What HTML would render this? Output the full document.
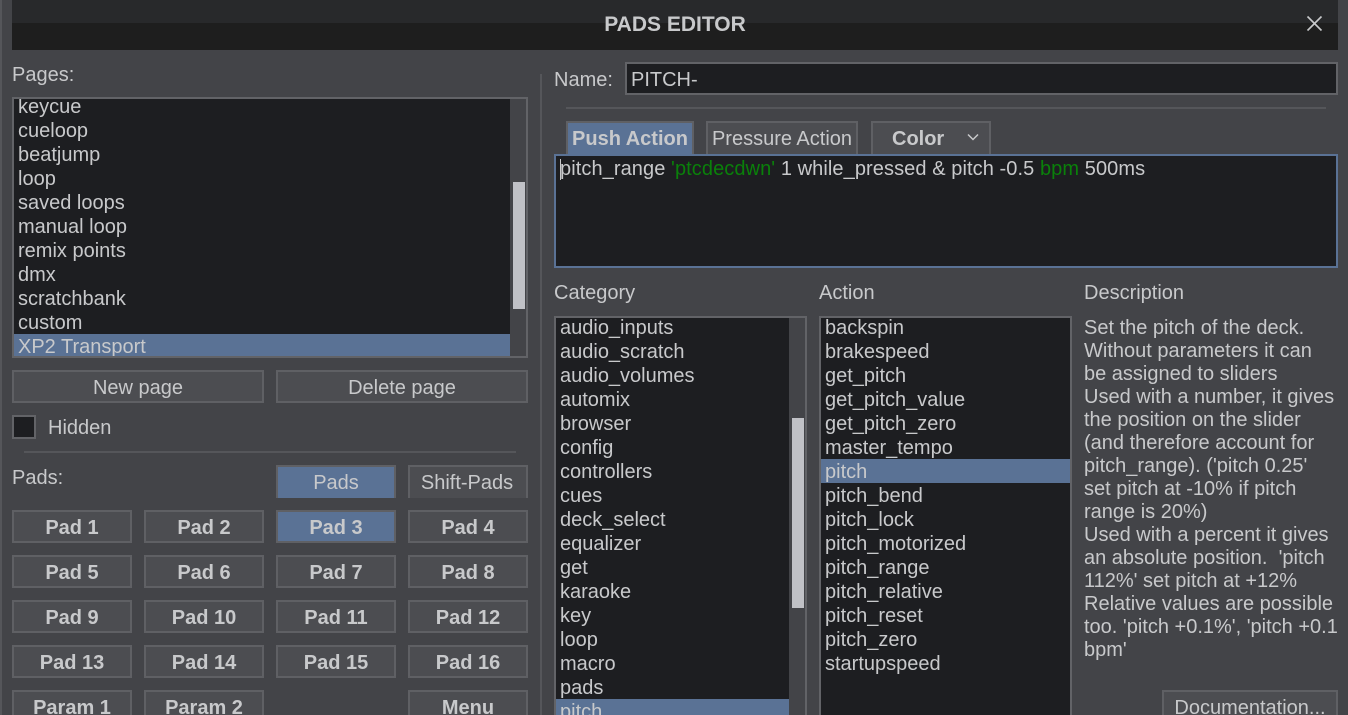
<!DOCTYPE html>
<html style="overflow:hidden;height:715px"><head><meta charset="utf-8">
<style>
html,body{margin:0;padding:0}
body{width:1348px;height:715px;overflow:hidden;position:relative;background:#434448;font-family:"Liberation Sans",Arial,sans-serif;font-size:20px;color:#c8c9cb}
div{position:absolute;box-sizing:border-box;white-space:nowrap}
.t{line-height:24px;height:24px}
.box{border:2px solid #626367;background:#1d1e21}
.b{border:2px solid #5f6064;background:#4c4d51;text-align:center;line-height:32px;height:33px;width:120px}
.p{font-weight:bold}
.sel{background:#5a7295}
.tab{border-bottom:0}
.g{color:#0a800a}
span{white-space:pre}
</style></head><body>
<div style="left:0;top:0;width:1348px;height:715px;overflow:hidden">
<div style="left:0;top:0;width:2px;height:715px;background:#55565a"></div>
<div style="left:12px;top:0;width:1326px;height:23px;background:#28292b"></div>
<div style="left:12px;top:23px;width:1326px;height:27px;background:#1e1e1e"></div>
<div class="t" style="left:0;width:1350px;top:13px;text-align:center;font-weight:bold;font-size:21px;color:#c8c9cb">PADS EDITOR</div>
<svg style="position:absolute;left:1305.5px;top:14.5px" width="17" height="17"><path d="M1.5 1.5L15.5 15.5M15.5 1.5L1.5 15.5" stroke="#c8c9cb" stroke-width="1.6" fill="none"/></svg>

<div class="t" style="left:12px;top:63px">Pages:</div>
<div class="box" style="left:12px;top:97px;width:516px;height:261px;overflow:hidden;background:#434448">
<div style="left:0;top:0;width:496px;height:257px;background:#1d1e21;overflow:hidden">
<div class="t" style="left:4px;top:-4px">keycue</div>
<div class="t" style="left:4px;top:20px">cueloop</div>
<div class="t" style="left:4px;top:44px">beatjump</div>
<div class="t" style="left:4px;top:68px">loop</div>
<div class="t" style="left:4px;top:92px">saved loops</div>
<div class="t" style="left:4px;top:116px">manual loop</div>
<div class="t" style="left:4px;top:140px">remix points</div>
<div class="t" style="left:4px;top:164px">dmx</div>
<div class="t" style="left:4px;top:188px">scratchbank</div>
<div class="t" style="left:4px;top:212px">custom</div>
<div class="sel" style="left:0;top:235px;width:496px;height:24px"></div>
<div class="t" style="left:4px;top:236px">XP2 Transport</div>
</div>
<div style="left:499px;top:83px;width:12px;height:127px;background:#c0c1c6"></div>
</div>

<div class="b" style="left:12px;top:370px;width:252px">New page</div>
<div class="b" style="left:276px;top:370px;width:252px">Delete page</div>
<div class="box" style="left:12px;top:415px;width:24px;height:24px"></div>
<div class="t" style="left:48px;top:416px">Hidden</div>
<div style="left:24px;top:451px;width:492px;height:2px;background:#55565a"></div>
<div class="t" style="left:12px;top:466px">Pads:</div>
<div class="b tab sel" style="left:276px;top:465px">Pads</div>
<div class="b tab" style="left:408px;top:465px;padding-right:2px">Shift-Pads</div>

<div class="b p" style="left:12px;top:510px">Pad 1</div>
<div class="b p" style="left:144px;top:510px">Pad 2</div>
<div class="b p sel" style="left:276px;top:510px">Pad 3</div>
<div class="b p" style="left:408px;top:510px">Pad 4</div>
<div class="b p" style="left:12px;top:555px">Pad 5</div>
<div class="b p" style="left:144px;top:555px">Pad 6</div>
<div class="b p" style="left:276px;top:555px">Pad 7</div>
<div class="b p" style="left:408px;top:555px">Pad 8</div>
<div class="b p" style="left:12px;top:600px">Pad 9</div>
<div class="b p" style="left:144px;top:600px">Pad 10</div>
<div class="b p" style="left:276px;top:600px">Pad 11</div>
<div class="b p" style="left:408px;top:600px">Pad 12</div>
<div class="b p" style="left:12px;top:645px">Pad 13</div>
<div class="b p" style="left:144px;top:645px">Pad 14</div>
<div class="b p" style="left:276px;top:645px">Pad 15</div>
<div class="b p" style="left:408px;top:645px">Pad 16</div>
<div class="b p" style="left:12px;top:690px">Param 1</div>
<div class="b p" style="left:144px;top:690px">Param 2</div>
<div class="b p" style="left:408px;top:690px">Menu</div>

<div style="left:540px;top:74px;width:2px;height:641px;background:#55565a"></div>

<div class="t" style="left:554px;top:68px">Name:</div>
<div class="box" style="left:625px;top:62px;width:713px;height:33px;padding-left:4px;line-height:33px">PITCH-</div>
<div style="left:566px;top:107px;width:760px;height:2px;background:#55565a"></div>

<div class="b tab sel p" style="left:566px;top:121px;width:128px;height:33px;line-height:32px">Push Action</div>
<div class="b tab" style="left:706px;top:121px;width:152px;height:33px;line-height:32px">Pressure Action</div>
<div class="b tab p" style="left:871px;top:121px;width:120px;height:33px;line-height:32px;text-align:left;padding-left:19px">Color
<svg style="position:absolute;left:94px;top:10px" width="12" height="9"><path d="M1 1.5L6 6.5L11 1.5" stroke="#c8c9cb" stroke-width="1.5" fill="none"/></svg></div>

<div style="left:554px;top:154px;width:784px;height:114px;border:2px solid #5a7295;background:#1d1e21">
<div style="left:4px;top:3px;width:1px;height:21px;background:#c8c9cb"></div>
<div class="t" style="left:4px;top:1px;letter-spacing:.08px">pitch_range <span class="g">'ptcdecdwn'</span> 1 while_pressed &amp; pitch -0.5 <span class="g">bpm</span> 500ms</div>
</div>

<div class="t" style="left:554px;top:281px">Category</div>
<div class="t" style="left:819px;top:281px">Action</div>
<div class="t" style="left:1084px;top:281px">Description</div>

<div class="box" style="left:554px;top:316px;width:253px;height:410px;background:#434448">
<div style="left:0;top:0;width:233px;height:410px;background:#1d1e21"></div>
<div class="sel" style="left:0;top:381px;width:233px;height:24px"></div>
<div class="t" style="left:4px;top:-2px">audio_inputs</div>
<div class="t" style="left:4px;top:22px">audio_scratch</div>
<div class="t" style="left:4px;top:46px">audio_volumes</div>
<div class="t" style="left:4px;top:70px">automix</div>
<div class="t" style="left:4px;top:94px">browser</div>
<div class="t" style="left:4px;top:118px">config</div>
<div class="t" style="left:4px;top:142px">controllers</div>
<div class="t" style="left:4px;top:166px">cues</div>
<div class="t" style="left:4px;top:190px">deck_select</div>
<div class="t" style="left:4px;top:214px">equalizer</div>
<div class="t" style="left:4px;top:238px">get</div>
<div class="t" style="left:4px;top:262px">karaoke</div>
<div class="t" style="left:4px;top:286px">key</div>
<div class="t" style="left:4px;top:310px">loop</div>
<div class="t" style="left:4px;top:334px">macro</div>
<div class="t" style="left:4px;top:358px">pads</div>
<div class="t" style="left:4px;top:382px">pitch</div>
<div style="left:236px;top:100px;width:12px;height:190px;background:#c0c1c6"></div>
</div>

<div class="box" style="left:819px;top:316px;width:253px;height:410px">
<div class="sel" style="left:0;top:141px;width:249px;height:24px"></div>
<div class="t" style="left:4px;top:-2px">backspin</div>
<div class="t" style="left:4px;top:22px">brakespeed</div>
<div class="t" style="left:4px;top:46px">get_pitch</div>
<div class="t" style="left:4px;top:70px">get_pitch_value</div>
<div class="t" style="left:4px;top:94px">get_pitch_zero</div>
<div class="t" style="left:4px;top:118px">master_tempo</div>
<div class="t" style="left:4px;top:142px">pitch</div>
<div class="t" style="left:4px;top:166px">pitch_bend</div>
<div class="t" style="left:4px;top:190px">pitch_lock</div>
<div class="t" style="left:4px;top:214px">pitch_motorized</div>
<div class="t" style="left:4px;top:238px">pitch_range</div>
<div class="t" style="left:4px;top:262px">pitch_relative</div>
<div class="t" style="left:4px;top:286px">pitch_reset</div>
<div class="t" style="left:4px;top:310px">pitch_zero</div>
<div class="t" style="left:4px;top:334px">startupspeed</div>
</div>

<div class="t" style="left:1084px;top:316px">Set the pitch of the deck.</div>
<div class="t" style="left:1084px;top:339px">Without parameters it can</div>
<div class="t" style="left:1084px;top:362px">be assigned to sliders</div>
<div class="t" style="left:1084px;top:385px">Used with a number, it gives</div>
<div class="t" style="left:1084px;top:408px">the position on the slider</div>
<div class="t" style="left:1084px;top:431px">(and therefore account for</div>
<div class="t" style="left:1084px;top:454px">pitch_range). ('pitch 0.25'</div>
<div class="t" style="left:1084px;top:477px">set pitch at -10% if pitch</div>
<div class="t" style="left:1084px;top:500px">range is 20%)</div>
<div class="t" style="left:1084px;top:523px">Used with a percent it gives</div>
<div class="t" style="left:1084px;top:546px"><span>an absolute position.  'pitch</span></div>
<div class="t" style="left:1084px;top:569px">112%' set pitch at +12%</div>
<div class="t" style="left:1084px;top:592px">Relative values are possible</div>
<div class="t" style="left:1084px;top:615px">too. 'pitch +0.1%', 'pitch +0.1</div>
<div class="t" style="left:1084px;top:638px">bpm'</div>

<div class="b" style="left:1162px;top:690px;width:176px">Documentation...</div>
</div>
</body></html>
